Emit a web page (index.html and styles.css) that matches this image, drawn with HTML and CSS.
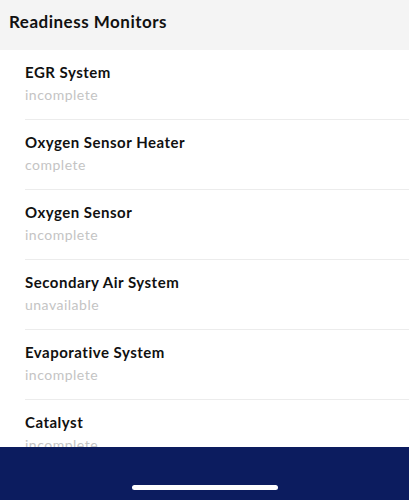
FILE: index.html
```html
<!DOCTYPE html>
<html>
<head>
<meta charset="utf-8">
<link rel="stylesheet" href="styles.css">
</head>
<body>
<div class="screen">
  <header class="header"><h1 class="title">Readiness Monitors</h1></header>
  <ul class="list">
    <li class="item"><div class="name">EGR System</div><div class="status">incomplete</div></li>
    <li class="item"><div class="name">Oxygen Sensor Heater</div><div class="status">complete</div></li>
    <li class="item"><div class="name">Oxygen Sensor</div><div class="status">incomplete</div></li>
    <li class="item"><div class="name">Secondary Air System</div><div class="status">unavailable</div></li>
    <li class="item"><div class="name">Evaporative System</div><div class="status">incomplete</div></li>
    <li class="item"><div class="name">Catalyst</div><div class="status">incomplete</div></li>
  </ul>
  <footer class="footer"><div class="home-bar"></div></footer>
</div>
</body>
</html>
```
FILE: styles.css
```css
* { box-sizing: border-box; }
html, body { margin: 0; padding: 0; }
body { font-family: Lato, "Noto Sans", sans-serif; background: #fff; }
.screen { width: 409px; height: 500px; display: flex; flex-direction: column; overflow: hidden; }
.header { height: 50px; background: #f4f4f4; display: flex; align-items: center; padding: 0 9px 8px; flex-shrink: 0; }
.title { margin: 0; font-size: 17px; font-weight: 700; color: #111; letter-spacing: 0.5px; }
.list { list-style: none; margin: 0; padding: 0 0 0 25px; flex: 1; overflow: hidden; }
.item { height: 70px; border-bottom: 1px solid #ececec; padding-top: 13px; }
.name { font-size: 15px; font-weight: 700; color: #111; line-height: 18px; letter-spacing: 0.5px; }
.status { font-size: 14px; color: #c4c4c4; line-height: 18px; margin-top: 5px; letter-spacing: 0.5px; }
.footer { height: 53px; background: #0c1c5f; flex-shrink: 0; display: flex; justify-content: center; padding-top: 38px; }
.home-bar { width: 146px; height: 5px; border-radius: 3px; background: #fff; }
```
